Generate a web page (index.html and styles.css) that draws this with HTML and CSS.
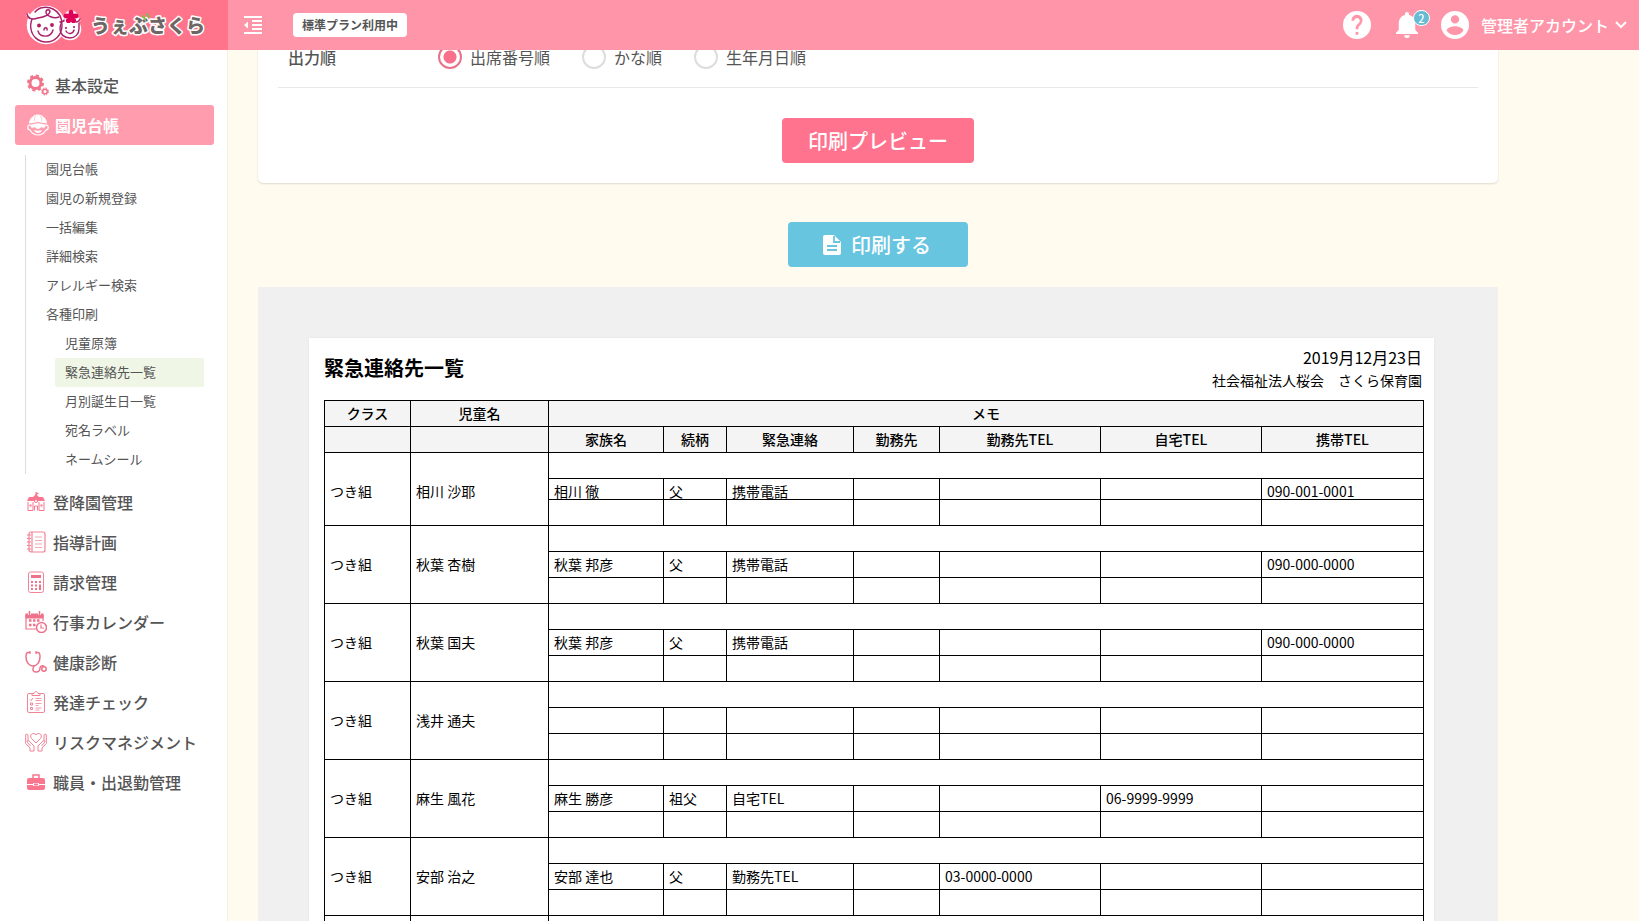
FILE: index.html
```html
<!DOCTYPE html>
<html lang="ja">
<head>
<meta charset="utf-8">
<title>緊急連絡先一覧 | うぇぶさくら</title>
<link rel="stylesheet" href="styles.css">
</head>
<body>
<header class="header">
  <a class="brand" href="#" aria-label="うぇぶさくら">
    <svg width="184" height="44" viewBox="0 0 184 44">
      <g fill="#fff" stroke="#fff" stroke-width="3.500" stroke-linejoin="round">
        <circle cx="20" cy="22" r="17.500"/><circle cx="44" cy="26" r="9.500"/><circle cx="45" cy="14" r="5"/><path d="M1 11l7 7M50 18l4-2"/>
      </g>
      <g fill="none" stroke="#a8206a" stroke-width="1.400" stroke-linecap="round" stroke-linejoin="round">
        <path d="M9 9C13 4 21 3 27 6c6 3 9 9 9 16 0 10-7 17-16 17-8 0-14-6-15-13-1-4 0-7 1-10"/>
        <path d="M1 11c1 5 5 6 11 4 6-1 11-3 12-6 0-3-4-3-4 0 0 4 8 7 13 5"/>
        <path d="M38 17c-3 2-4 5-4 9 0 5 4 9 10 9 5 0 9-4 9-9v-6M50 19c2 0 3-1 4-3M34 19l4-1"/>
        <path d="M12 28c2 7 13 7 15-1M40 28c2 4 7 3 8-1"/>
        <path d="M18 27c0-3 4-3 3 0"/>
      </g>
      <g fill="#b3175f"><circle cx="13" cy="22.500" r="1.900"/><circle cx="26" cy="22" r="1.900"/><circle cx="40" cy="25" r="1.100"/><circle cx="48" cy="24" r="1.100"/></g>
      <g fill="#df0057"><ellipse cx="45" cy="10" rx="2.400" ry="3.200"/><ellipse cx="40.800" cy="13" rx="3.200" ry="2.400"/><ellipse cx="49.200" cy="13" rx="3.200" ry="2.400"/><circle cx="42.500" cy="17.500" r="2.600"/><circle cx="47.500" cy="17.500" r="2.600"/><circle cx="45" cy="14" r="3"/></g>
      <text class="brand-name" x="65" y="30">うぇぶさくら</text>
      <path d="M117 13l2 3M121 11l2 3" stroke="#7cc043" stroke-width="2" stroke-linecap="round"/>
    </svg>
  </a>
  <div class="topbar">
    <button class="icon-button" type="button" aria-label="メニューを閉じる">
      <svg width="18" height="18" viewBox="0 0 18 18" fill="#fff"><path d="M0 0h18v2H0zM8 4h10v2H8zM8 8h10v2H8zM8 12h10v2H8zM0 16h18v2H0zM4 5.500v7L0 9z"/></svg>
    </button>
    <span class="plan">標準プラン利用中</span>
    <div class="tools">
      <button class="icon-button" type="button" aria-label="ヘルプ">
        <svg width="28" height="28" viewBox="2 2 20 20" fill="#fff"><path d="M12 2a10 10 0 1 0 0 20 10 10 0 0 0 0-20zm1 17h-2v-2h2zm2.070-7.750-.9.920C13.450 12.900 13 13.500 13 15h-2v-.5c0-1.100.45-2.100 1.170-2.830l1.240-1.260A2 2 0 1 0 10 9H8a4 4 0 1 1 7.070 2.250z"/></svg>
      </button>
      <button class="icon-button bell" type="button" aria-label="お知らせ 2件">
        <svg width="22" height="26" viewBox="4 2.500 16 19.500" preserveAspectRatio="none" fill="#fff"><path d="M12 22a2 2 0 0 0 2-2h-4a2 2 0 0 0 2 2zm6-6v-5c0-3.070-1.640-5.640-4.500-6.320V4a1.500 1.500 0 0 0-3 0v.68C7.630 5.360 6 7.920 6 11v5l-2 2v1h16v-1z"/></svg>
        <span class="count">2</span>
      </button>
      <button class="account" type="button">
        <svg width="28" height="28" viewBox="2 2 20 20" fill="#fff"><path d="M12 2a10 10 0 1 0 0 20 10 10 0 0 0 0-20zm0 3a3 3 0 1 1 0 6 3 3 0 0 1 0-6zm0 14.200a7.200 7.200 0 0 1-6-3.220c.03-1.990 4-3.080 6-3.080s5.970 1.090 6 3.080a7.200 7.200 0 0 1-6 3.220z"/></svg>
        <span>管理者アカウント</span>
        <svg width="12" height="8" viewBox="0 0 12 8" fill="none" stroke="#fff" stroke-width="2"><path d="M1 1l5 5 5-5"/></svg>
      </button>
    </div>
  </div>
</header>
<div class="layout">
  <nav class="sidebar">
    <a class="item inset" href="#">
      <svg class="icon" viewBox="0 0 22 22" fill="none" stroke="#f0748b"><circle cx="8.500" cy="9" r="5.500" stroke-width="3"/><circle cx="8.500" cy="9" r="7.500" stroke-width="2" stroke-dasharray="3.200 2.700"/><circle cx="18" cy="17.500" r="2.300" stroke-width="1.500"/><circle cx="18" cy="17.500" r="3.500" stroke-width="1" stroke-dasharray="1.600 1.150"/></svg>
      基本設定</a>
    <a class="item inset current" href="#">
      <svg class="icon" viewBox="0 0 22 22" fill="none" stroke="#fff"><path d="M2.500 9C3 4 7 1 11 1s8 3 8.500 8q-8.500-3-17 0z" fill="#fff"/><path d="M8.500 2Q7 4.500 7 7M13.500 2Q15 4.500 15 7" stroke="#ffb3c0" stroke-width=".8"/><path d="M3 10.500c-3 1-3 5 0 5.500 2 3.500 5 5 8 5s6-1.500 8-5c3-.5 3-4.500 0-5.500" stroke-width="1.200"/><path d="M3 11q8-3 16 0l-2 3q-3-2-4 0-2 1.500-4 0-1-2-4 0z" fill="#fff" stroke-width=".5"/><path d="M7 16q4 1.500 8 0-1 3-4 3t-4-3z" fill="#fff" stroke="none"/></svg>
      園児台帳</a>
    <div class="sub">
      <a href="#">園児台帳</a>
      <a href="#">園児の新規登録</a>
      <a href="#">一括編集</a>
      <a href="#">詳細検索</a>
      <a href="#">アレルギー検索</a>
      <a href="#">各種印刷</a>
      <div class="sub-inner">
        <a href="#">児童原簿</a>
        <a class="here" href="#">緊急連絡先一覧</a>
        <a href="#">月別誕生日一覧</a>
        <a href="#">宛名ラベル</a>
        <a href="#">ネームシール</a>
      </div>
    </div>
    <a class="item" href="#">
      <svg class="icon" viewBox="0 0 22 22" fill="none" stroke="#f9768e"><path d="M11 1v5" /><path d="M11 1l3 1.500-3 1.500z" fill="#f9768e" stroke="none"/><path d="M2 10l2-4h4l3-3 3 3h4l2 4z" fill="#f9768e" stroke="none"/><path d="M3 11v8.500h5V11M19 11v8.500h-5V11M9.500 19.500V15h3v4.500" stroke-width="1"/><path d="M4.500 13.500h2v2h-2zM15.500 13.500h2v2h-2z" fill="#f9768e" stroke="none"/><circle cx="11" cy="10" r="1.500" fill="#fff"/></svg>
      登降園管理</a>
    <a class="item" href="#">
      <svg class="icon" viewBox="0 0 22 22" fill="none" stroke="#f28396" stroke-width="1.200"><rect x="4" y="1" width="16" height="20" rx="2"/><path d="M7 1v20M2 4h4M2 7.500h4M2 11h4M2 14.500h4M2 18h4"/><path d="M10 6h7M10 9.500h7M10 13h7M10 16.500h7" stroke-width=".7"/></svg>
      指導計画</a>
    <a class="item" href="#">
      <svg class="icon" viewBox="0 0 22 22" fill="none" stroke="#f28396"><rect x="3.500" y="1" width="15" height="20.500" rx="2"/><path d="M6 5.500h10" stroke="#ee7289" stroke-width="3"/><path d="M6 11h2m2 0h2m2 0h2M6 14.500h2m2 0h2m2 0h2M6 18h2m2 0h2m2 0h2M15 14v5" stroke="#ee7289" stroke-width="2"/></svg>
      請求管理</a>
    <a class="item" href="#">
      <svg class="icon" viewBox="0 0 22 22" fill="none" stroke="#ee7289" stroke-width="1.200"><path d="M1 3h17v4H1z" fill="#ee7289"/><path d="M4.500 0v4M14.500 0v4" stroke="#fff" stroke-width="3"/><path d="M4.500 0v4M14.500 0v4" stroke-width="1.500"/><path d="M1 4v14h10M18 4v6"/><path d="M4 9.500h2.500m1.500 0h2.500m1.500 0h2.500M4 14h2.500m1.500 0h2.500" stroke-width="2.500"/><circle cx="16.500" cy="16.500" r="5" fill="#fff" stroke-width="1.500"/><path d="M16 13.500v3.500h3"/></svg>
      行事カレンダー</a>
    <a class="item" href="#">
      <svg class="icon" viewBox="0 0 22 22" fill="none" stroke="#ee7289" stroke-width="1.500" stroke-linecap="round"><path d="M5 1.500H3C1 1.500 1 4 1 6c0 5 3 9 7 9s7-4 7-9c0-2 0-4.500-2-4.500h-2M5 .8v1.500M11 .8v1.500"/><path d="M9 15c-2 4-1 6 2 6s4-2 4-4 3-3 4-1.500"/><circle cx="19" cy="18" r="2.200"/></svg>
      健康診断</a>
    <a class="item" href="#">
      <svg class="icon" viewBox="0 0 22 22" fill="none" stroke="#f28396"><rect x="2.500" y="2.500" width="17" height="19" rx="1.500"/><path d="M7 4.500V2.500h2c.5-2.500 3.500-2.500 4 0h2v2z" fill="#fff"/><path d="M5 8.500l1 1 2-2.500M5.500 12h2v2h-2zM5.500 16.500h2v2h-2z"/><path d="M10.500 7.500h6M10.500 9.500h6M10.500 12.500h6M10.500 14.500h3M10.500 17h6M10.500 19h4" stroke-width=".8"/></svg>
      発達チェック</a>
    <a class="item" href="#">
      <svg class="icon" viewBox="0 0 22 22" fill="none" stroke="#f28396" stroke-linejoin="round"><path d="M11 12L6.500 7.500C3.500 3.500 9 .5 11 4c2-3.500 7.500-.5 4.500 3.500z"/><path d="M.7 3.500v9L5 17v3h4v-5l-5-5c-1.500-1-2.500.5-1.500 1.500l3 3.500M.7 3.500c1.500-1 2.300 0 2.300 1.500v5M21.300 3.500v9L17 17v3h-4v-5l5-5c1.500-1 2.500.5 1.500 1.500l-3 3.500M21.300 3.500c-1.500-1-2.300 0-2.300 1.500v5"/></svg>
      リスクマネジメント</a>
    <a class="item" href="#">
      <svg class="icon" viewBox="0 0 22 22" fill="#f9768e"><path d="M4 7h14q2 0 2 2v4h-6v-1H8v1H2V9q0-2 2-2zM2 14h6v1h6v-1h6v3q0 2-2 2H4q-2 0-2-2z"/><path d="M8 7V4h6v3" fill="none" stroke="#f9768e" stroke-width="1.500"/><path d="M9 12.500h4v2H9z"/></svg>
      職員・出退勤管理</a>
  </nav>
  <main class="main">
    <form class="card">
      <fieldset class="order">
        <legend class="order-label">出力順</legend>
        <label class="choice"><input type="radio" name="order" checked>出席番号順</label>
        <label class="choice"><input type="radio" name="order">かな順</label>
        <label class="choice"><input type="radio" name="order">生年月日順</label>
      </fieldset>
      <button class="button preview" type="button">印刷プレビュー</button>
    </form>
    <button class="button print" type="button">
      <svg width="18" height="20" viewBox="0 0 18 20"><path d="M2 0h9l7 7v11a2 2 0 0 1-2 2H2a2 2 0 0 1-2-2V2a2 2 0 0 1 2-2z" fill="#fff"/><path d="M11 1v6h6M4 11h10M4 15h10" fill="none" stroke="#67c5df" stroke-width="1.800"/></svg>
      印刷する
    </button>
    <div class="canvas">
      <section class="paper">
        <div class="paper-head">
          <h1>緊急連絡先一覧</h1>
          <div class="meta"><div class="date">2019月12月23日</div><div>社会福祉法人桜会　さくら保育園</div></div>
        </div>
        <table class="contacts">
          <colgroup><col class="c-class"><col class="c-child"><col class="c-family"><col class="c-relation"><col class="c-urgent"><col class="c-work"><col class="c-tel"><col class="c-tel"><col></colgroup>
          <thead>
            <tr><th>クラス</th><th>児童名</th><th colspan="7">メモ</th></tr>
            <tr><th></th><th></th><th>家族名</th><th>続柄</th><th>緊急連絡</th><th>勤務先</th><th>勤務先TEL</th><th>自宅TEL</th><th>携帯TEL</th></tr>
          </thead>
          <tbody class="compact">
            <tr><td rowspan="3">つき組</td><td rowspan="3">相川 沙耶</td><td colspan="7"></td></tr>
            <tr class="tight"><td>相川 徹</td><td>父</td><td>携帯電話</td><td></td><td></td><td></td><td>090-001-0001</td></tr>
            <tr><td></td><td></td><td></td><td></td><td></td><td></td><td></td></tr>
          </tbody>
          <tbody>
            <tr><td rowspan="3">つき組</td><td rowspan="3">秋葉 杏樹</td><td colspan="7"></td></tr>
            <tr><td>秋葉 邦彦</td><td>父</td><td>携帯電話</td><td></td><td></td><td></td><td>090-000-0000</td></tr>
            <tr><td></td><td></td><td></td><td></td><td></td><td></td><td></td></tr>
          </tbody>
          <tbody>
            <tr><td rowspan="3">つき組</td><td rowspan="3">秋葉 国夫</td><td colspan="7"></td></tr>
            <tr><td>秋葉 邦彦</td><td>父</td><td>携帯電話</td><td></td><td></td><td></td><td>090-000-0000</td></tr>
            <tr><td></td><td></td><td></td><td></td><td></td><td></td><td></td></tr>
          </tbody>
          <tbody>
            <tr><td rowspan="3">つき組</td><td rowspan="3">浅井 通夫</td><td colspan="7"></td></tr>
            <tr><td></td><td></td><td></td><td></td><td></td><td></td><td></td></tr>
            <tr><td></td><td></td><td></td><td></td><td></td><td></td><td></td></tr>
          </tbody>
          <tbody>
            <tr><td rowspan="3">つき組</td><td rowspan="3">麻生 風花</td><td colspan="7"></td></tr>
            <tr><td>麻生 勝彦</td><td>祖父</td><td>自宅TEL</td><td></td><td></td><td>06-9999-9999</td><td></td></tr>
            <tr><td></td><td></td><td></td><td></td><td></td><td></td><td></td></tr>
          </tbody>
          <tbody>
            <tr><td rowspan="3">つき組</td><td rowspan="3">安部 治之</td><td colspan="7"></td></tr>
            <tr><td>安部 達也</td><td>父</td><td>勤務先TEL</td><td></td><td>03-0000-0000</td><td></td><td></td></tr>
            <tr><td></td><td></td><td></td><td></td><td></td><td></td><td></td></tr>
          </tbody>
          <tbody>
            <tr><td></td><td></td><td colspan="7"></td></tr>
          </tbody>
        </table>
      </section>
    </div>
  </main>
</div>
</body>
</html>
```
FILE: styles.css
```css
* { box-sizing: border-box; }

body {
  margin: 0;
  height: 100vh;
  overflow: hidden;
  display: flex;
  flex-direction: column;
  background: #fffbee;
  color: #555;
  font: 16px/24px "Noto Sans CJK JP", sans-serif;
}

a { color: inherit; text-decoration: none; }

button {
  border: 0;
  padding: 0;
  background: none;
  color: inherit;
  font: inherit;
}

svg { display: block; flex: none; }

/* Header */
.header {
  position: relative;
  z-index: 2;
  flex: none;
  display: flex;
  height: 50px;
  color: #fff;
}

.brand {
  flex: none;
  width: 228px;
  padding: 3px 0 0 26px;
  background: #ff738b;
}

.brand svg { overflow: visible; }

.brand-name {
  fill: #6e6664;
  stroke: #fff;
  stroke-width: 3px;
  stroke-linejoin: round;
  paint-order: stroke;
  font-size: 19px;
  font-weight: 900;
}

.topbar {
  flex: 1;
  display: flex;
  align-items: center;
  padding: 0 12px 0 16px;
  background: #ff95a8;
}

.plan {
  margin-left: 31px;
  padding: 0 9px;
  border-radius: 4px;
  background: #fff;
  color: #555;
  font-size: 12px;
  font-weight: 700;
}

.tools {
  display: flex;
  align-items: center;
  margin-left: auto;
}

.bell {
  position: relative;
  margin: 0 23px 0 25px;
}

.count {
  position: absolute;
  top: -2px;
  right: -12px;
  width: 17px;
  height: 16px;
  border: 1px solid #fff;
  border-radius: 8px;
  background: #67bcd4;
  font-size: 11px;
  font-weight: 500;
  line-height: 14px;
  text-align: center;
}

.account {
  display: flex;
  align-items: center;
  gap: 6px;
  font-weight: 500;
}

.account span { margin-left: 6px; }

/* Sidebar */
.layout {
  flex: 1;
  min-height: 0;
  display: flex;
}

.sidebar {
  flex: none;
  width: 228px;
  padding: 15px 13px 0 15px;
  border-right: 1px solid #f3efe2;
  background: #fff;
}

.item {
  display: flex;
  align-items: center;
  gap: 6px;
  height: 40px;
  padding-left: 10px;
  font-weight: 500;
  white-space: nowrap;
}

.item.inset { padding-left: 12px; }

.item.current {
  border-radius: 3px;
  background: #ff9cae;
  color: #fff;
  font-weight: 700;
}

.icon { width: 22px; height: 22px; }

.sub {
  margin: 10px 10px 8px;
  border-left: 1px solid #ddd;
  font-size: 13px;
  line-height: 27px;
}

.sub a {
  display: block;
  padding: 0 0 2px 20px;
}

.sub-inner { padding-left: 29px; }
.sub-inner a { padding-left: 10px; }
.sub-inner .here { border-radius: 2px; background: #eff6e6; }

/* Print settings */
.main {
  flex: 1;
  min-width: 0;
  padding: 0 30px;
  display: flex;
  flex-direction: column;
}

.card {
  flex: none;
  max-width: 1240px;
  margin: -20px 0 0;
  padding: 0 20px 20px;
  border-radius: 0 0 5px 5px;
  background: #fff;
  box-shadow: 0 1px 2px #0002;
}

.order {
  display: flex;
  align-items: center;
  gap: 32px;
  margin: 0;
  padding: 15px 10px 18px;
  border: 0;
  border-bottom: 1px solid #e8e8e8;
}

.order-label {
  float: left;
  width: 118px;
  padding: 0;
  font-weight: 500;
}

.choice {
  display: flex;
  align-items: center;
  gap: 8px;
}

.choice input {
  appearance: none;
  width: 24px;
  height: 24px;
  margin: 0;
  border: 2px solid #ddd;
  border-radius: 50%;
  background: #fff;
}

.choice input:checked {
  border-color: #e8748a;
  background: radial-gradient(circle, #f9708a 6px, #fff 7px);
}

.button {
  flex: none;
  display: flex;
  align-items: center;
  justify-content: center;
  gap: 10px;
  height: 45px;
  border-radius: 4px;
  color: #fff;
  font-size: 20px;
  font-weight: 500;
}

.preview {
  width: 192px;
  margin: 30px auto 0;
  background: #ff738e;
}

.print {
  width: 180px;
  margin: 39px 0 20px calc(min(100%, 1240px) / 2 - 90px);
  padding-right: 2px;
  background: #67c5df;
}

/* Printed sheet */
.canvas {
  flex: 1 0 auto;
  max-width: 1240px;
  padding: 51px 64px 51px 51px;
  background: #f0f0f0;
}

.paper {
  padding: 7px 10px 24px 15px;
  background: #fff;
  box-shadow: 0 0 2px #0001;
  color: #000;
}

.paper-head {
  display: flex;
  justify-content: space-between;
  height: 55px;
}

.paper-head h1 {
  margin: 8px 0 0;
  font-size: 20px;
  font-weight: 700;
  line-height: 30px;
}

.meta {
  padding-right: 2px;
  font-size: 14px;
  line-height: 22px;
  text-align: right;
}

.date { font-size: 16px; line-height: 24px; }

.contacts {
  width: 100%;
  table-layout: fixed;
  border-collapse: collapse;
  font-size: 14px;
  line-height: 20px;
}

.c-class, .c-work { width: 86px; }
.c-child { width: 138px; }
.c-family { width: 115px; }
.c-relation { width: 63px; }
.c-urgent { width: 127px; }
.c-tel { width: 161px; }

.contacts tr { height: 26px; }

.contacts th, .contacts td {
  padding: 1px 5px 3px;
  border: 1px solid #000;
  text-align: left;
}

.contacts th {
  background: #f4f4f4;
  font-weight: 500;
  text-align: center;
}

.contacts .tight { height: 21px; }

.contacts .compact td {
  padding: 4px 5px 0;
  line-height: 16px;
}
```
